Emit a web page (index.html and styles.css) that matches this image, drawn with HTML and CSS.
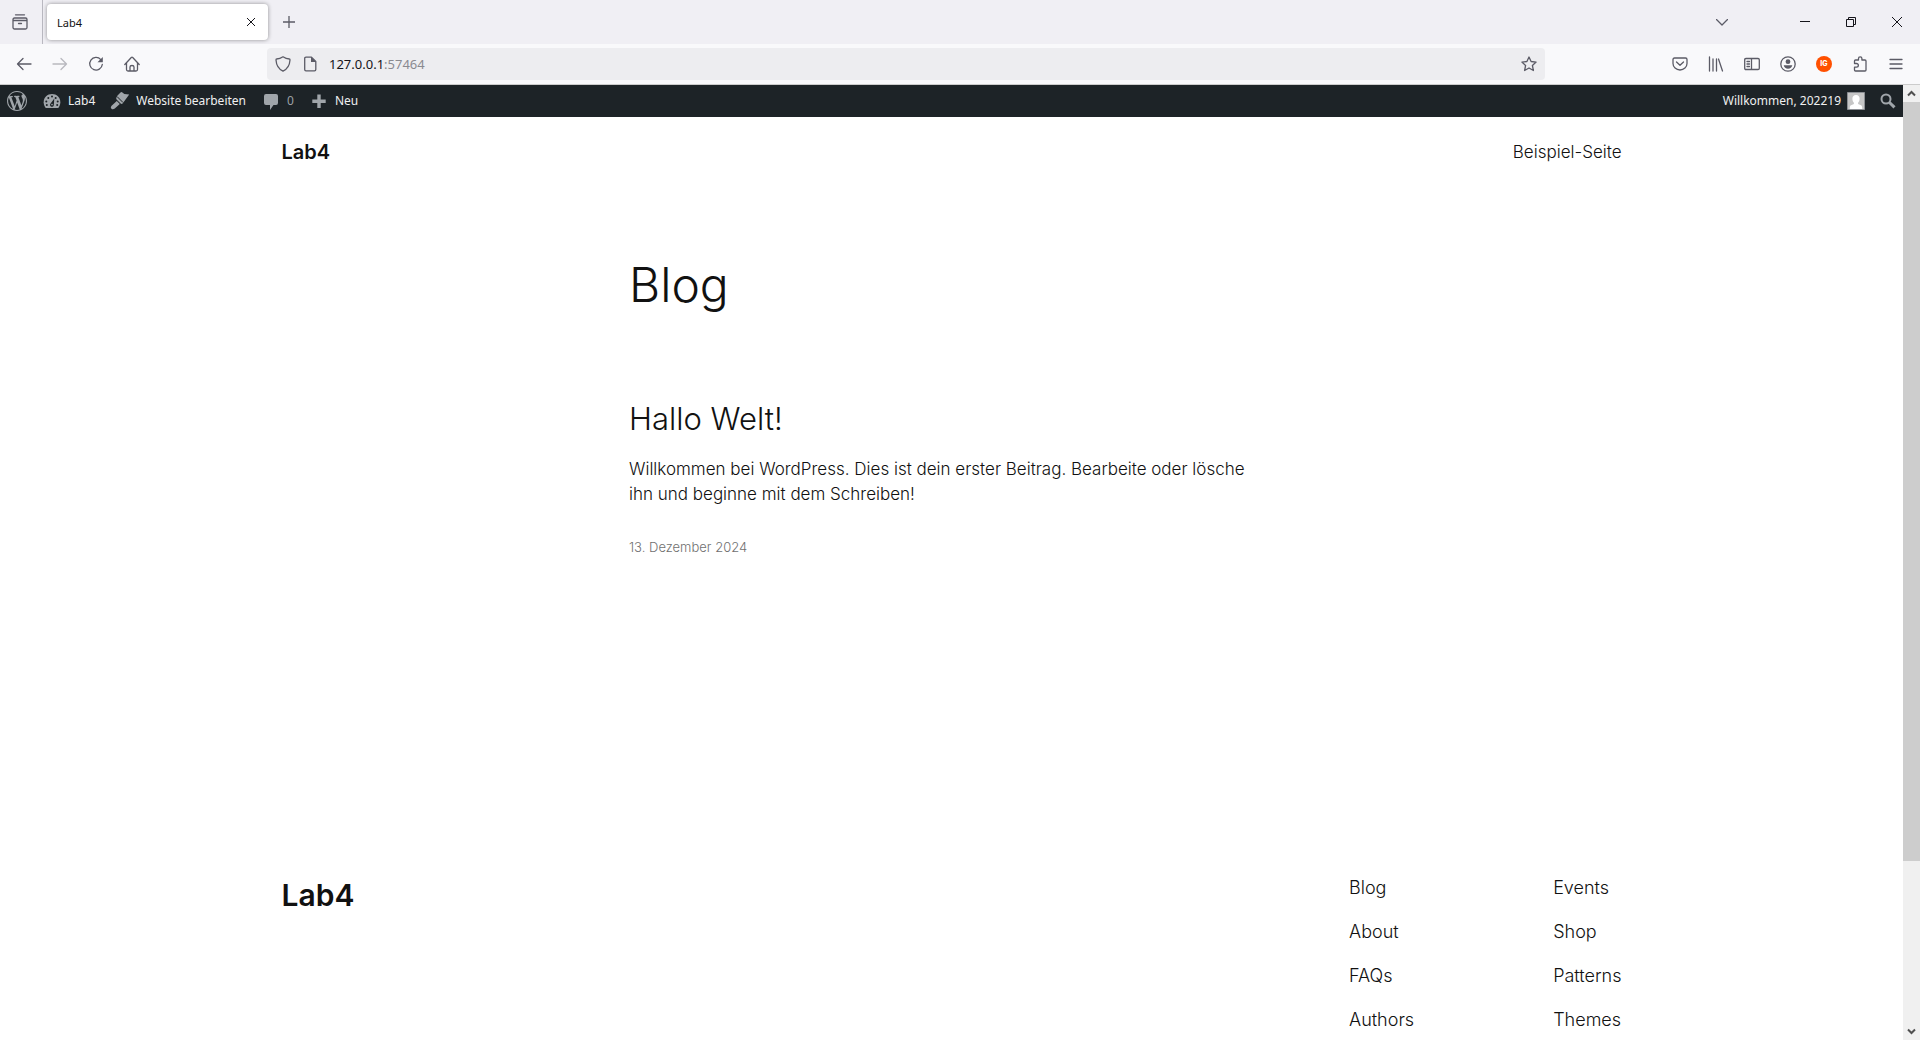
FILE: index.html
```html
<!DOCTYPE html>
<html lang="de">
<head>
<meta charset="utf-8">
<title>Lab4</title>
<link rel="stylesheet" href="styles.css">
</head>
<body>
<div class="tabbar">
  <button class="icon-btn recent" aria-label="Firefox View"><svg class="line" width="16" height="16" viewBox="0 0 16 16"><path d="M3.500 .8h9M1 7V5.500Q1 4 2.500 4h11Q15 4 15 5.500v8a1.500 1.500 0 0 1-1.500 1.500h-11A1.500 1.500 0 0 1 1 13.500zM1 6.500h14M6.500 9.500h3"/></svg></button>
  <div class="tab"><span class="tab-title">Lab4</span><button class="tab-close" aria-label="Tab schließen"><svg class="dark" width="8" height="8" viewBox="0 0 8 8"><path d="M0 0l8 8M8 0L0 8"/></svg></button></div>
  <button class="icon-btn new-tab" aria-label="Neuer Tab"><svg class="line" width="12" height="12" viewBox="0 0 12 12"><path d="M6 0v12M0 6h12"/></svg></button>
  <div class="window-controls">
    <button class="icon-btn list-tabs" aria-label="Alle Tabs auflisten"><svg class="line" width="12" height="7" viewBox="0 0 12 7"><path d="M.5 .5L6 6l5.500-5.500"/></svg></button>
    <button class="icon-btn win" aria-label="Minimieren"><svg class="dark" width="10" height="10" viewBox="0 0 10 10"><path d="M0 4.500h10"/></svg></button>
    <button class="icon-btn win" aria-label="Verkleinern"><svg class="dark" width="10" height="10" viewBox="0 0 10 10"><path d="M.5 2.500h7v7h-7zM2.500 2.500v-2h7v7h-2"/></svg></button>
    <button class="icon-btn win" aria-label="Schließen"><svg class="dark" width="10" height="10" viewBox="0 0 10 10"><path d="M0 0l10 10M10 0L0 10"/></svg></button>
  </div>
</div>

<div class="toolbar">
  <div class="nav-buttons">
    <button class="icon-btn" aria-label="Zurück"><svg class="line" width="16" height="16" viewBox="0 0 16 16"><path d="M15 8H1.500M7 2.500L1.500 8 7 13.500"/></svg></button>
    <button class="icon-btn" aria-label="Vor" disabled><svg class="line" width="16" height="16" viewBox="0 0 16 16"><path d="M1 8h13.500M9 2.500L14.500 8 9 13.500"/></svg></button>
    <button class="icon-btn" aria-label="Neu laden"><svg class="line" width="16" height="16" viewBox="0 0 16 16"><path d="M12.800 3.600A6.300 6.300 0 1 0 14.300 8.500"/><path class="solid" d="M14.800 1v5.300H9.500z"/></svg></button>
    <button class="icon-btn" aria-label="Startseite"><svg class="line" width="16" height="16" viewBox="0 0 16 16"><path d="M.8 8.500L7.300 1.500q.7-.6 1.400 0l6.500 7M2.500 7v6.500q0 1.500 1.500 1.500h8q1.500 0 1.500-1.500V7M6 15v-4q0-1.500 2-1.500t2 1.500v4"/></svg></button>
  </div>
  <div class="urlbar">
    <svg class="line" width="16" height="16" viewBox="0 0 16 16"><path d="M8 .8Q11 2.800 14.500 3q.5 0 .5 1Q14.500 12 8 15.200 1.500 12 1 4q0-1 .5-1Q5 2.800 8 .8z"/></svg>
    <svg class="line" width="16" height="16" viewBox="0 0 16 16"><path d="M4 1.200h5.500l4.300 4.300V13.500q0 1.300-1.300 1.300H4q-1.300 0-1.300-1.300v-11Q2.700 1.200 4 1.200z"/><path class="solid" d="M9 1v5h5z"/></svg>
    <span class="url"><span class="host">127.0.0.1</span>:57464</span>
    <button class="icon-btn star" aria-label="Lesezeichen"><svg class="line" width="16" height="16" viewBox="0 0 16 16"><path d="M8 1l2.100 4.500 5 .6-3.700 3.400 1 5L8 12l-4.400 2.500 1-5L.9 6.100l5-.6z"/></svg></button>
  </div>
  <div class="extensions">
    <button class="icon-btn" aria-label="Pocket"><svg class="line" width="16" height="16" viewBox="0 0 16 16"><path d="M2.500 2h11Q15 2 15 3.500V7.500A7 6.500 0 0 1 1 7.500V3.500Q1 2 2.500 2zM4.500 6L8 9.300 11.500 6"/></svg></button>
    <button class="icon-btn" aria-label="Bibliothek"><svg class="line" width="16" height="16" viewBox="0 0 16 16"><path d="M1.500 1v14M5 3v12M8.500 3v12M10.500 3l4 12"/></svg></button>
    <button class="icon-btn" aria-label="Seitenleisten"><svg class="line" width="16" height="16" viewBox="0 0 16 16"><path d="M2 2.500h12q1.300 0 1.300 1.300v8.400q0 1.300-1.300 1.300H2Q.7 13.500.7 12.200V3.800Q.7 2.500 2 2.500zM7.500 2.500v11M3 5.500h2.500M3 8h2.500M3 10.500h2.500"/></svg></button>
    <button class="icon-btn" aria-label="Konto"><svg class="line" width="16" height="16" viewBox="0 0 16 16"><circle cx="8" cy="8" r="7.200"/><circle class="solid" cx="8" cy="5.700" r="2.400"/><path class="solid" d="M3.700 9.300h8.600q-.8 3.400-4.300 3.400T3.700 9.300z"/></svg></button>
    <button class="icon-btn" aria-label="IG"><span class="ig">IG</span></button>
    <button class="icon-btn" aria-label="Erweiterungen"><svg class="line" width="16" height="16" viewBox="0 0 16 16"><path d="M2.500 7.500V5q0-1 1-1h3V2.500a1.700 1.700 0 0 1 3.400 0V4H13q1 0 1 1v9q0 1-1 1H3.500q-1 0-1-1v-2.800H4.500a1.800 1.800 0 0 0 0-3.700z"/></svg></button>
    <button class="icon-btn" aria-label="Menü"><svg class="line" width="16" height="16" viewBox="0 0 16 16"><path d="M2 3.500h12M2 8h12M2 12.500h12"/></svg></button>
  </div>
</div>

<div class="viewport">
  <div class="page">
    <nav class="adminbar" aria-label="Werkzeugleiste">
      <a href="#" aria-label="Über WordPress"><svg width="20" height="20" viewBox="0 0 20 20"><path d="M20 10c0-5.510-4.490-10-10-10C4.480 0 0 4.490 0 10c0 5.520 4.480 10 10 10 5.510 0 10-4.480 10-10zM7.780 15.370L4.370 6.220c.55-.02 1.170-.08 1.170-.08.5-.06.44-1.130-.06-1.110 0 0-1.450.11-2.370.11-.18 0-.37 0-.58-.01C4.120 2.690 6.870 1.110 10 1.110c2.330 0 4.450.87 6.050 2.340-.68-.11-1.650.39-1.650 1.580 0 .74.45 1.360.9 2.100.35.61.55 1.360.55 2.460 0 1.490-1.400 5-1.400 5l-3.030-8.370c.54-.02.82-.17.82-.17.5-.05.44-1.250-.06-1.220 0 0-1.440.12-2.380.12-.87 0-2.330-.12-2.330-.12-.5-.03-.56 1.200-.06 1.220l.92.08 1.260 3.410zM17.410 10c.24-.64.74-1.870.43-4.250.7 1.290 1.050 2.710 1.050 4.250 0 3.290-1.730 6.240-4.400 7.780.97-2.590 1.940-5.200 2.920-7.780zM6.100 18.090C3.120 16.650 1.110 13.530 1.110 10c0-1.300.23-2.480.72-3.590C3.250 10.300 4.670 14.200 6.100 18.090zm4.030-6.630l2.580 6.980c-.86.29-1.760.45-2.710.45-.79 0-1.570-.11-2.290-.33.81-2.380 1.620-4.740 2.420-7.100z"/></svg></a>
      <a href="#"><svg width="20" height="20" viewBox="0 0 20 20"><path d="M3.760 17h12.480c1.340-1.590 2.090-3.600 2.090-5.790C18.330 6.160 14.600 3 10 3s-8.330 3.160-8.330 8.210c0 2.190.76 4.200 2.090 5.790z"/><g class="cut"><circle cx="10" cy="5.500" r="1"/><circle cx="6.300" cy="7" r="1"/><circle cx="13.700" cy="7" r="1"/><circle cx="4.300" cy="10.500" r="1"/><circle cx="15.700" cy="10.500" r="1"/><circle cx="4.800" cy="14" r="1"/><circle cx="15.200" cy="14" r="1"/><path d="M12.300 7.500l-.5 6.400a1.900 1.900 0 1 1-3.200-1.400z"/></g><circle cx="10" cy="13.600" r=".8"/></svg>Lab4</a>
      <a href="#"><svg width="20" height="20" viewBox="0 0 20 20"><path d="M7.500 4.500L10.500 1.500q.9-.8 1.900 0L14.300 3l4.900.5-6.400 8.800q-1 1.200-2.200.2L6.800 8.700q-1-1-.4-2.300zM6.800 10l3 3-5 4.600q-2 1.400-3.400.1t.2-3z"/><path class="seam" d="M7 5.500l6 6"/></svg>Website bearbeiten</a>
      <a href="#" class="comments"><svg width="20" height="20" viewBox="0 0 20 20"><path d="M5 3h10q2 0 2 2v7q0 2-2 2h-2.500L9 19v-5H5q-2 0-2-2V5q0-2 2-2z"/></svg>0</a>
      <a href="#"><svg width="20" height="20" viewBox="0 0 20 20"><path d="M8.300 3.500h3.400v5h5v3.400h-5v5H8.300v-5h-5V8.500h5z"/></svg>Neu</a>
      <a href="#" class="account">Willkommen, 202219<svg width="18" height="18" viewBox="0 0 18 18"><path class="avatar-bg" d="M.5 .5h17v17H.5z"/><path class="avatar" d="M9 3c2.500 0 3.800 1.700 3.600 4-.1 1.800-.7 3-1.500 3.700v1.200l3.400 1.600q.8.5.8 3.500H2.700q0-3 .8-3.500l3.400-1.600v-1.200C6.100 10 5.500 8.800 5.400 7 5.200 4.700 6.500 3 9 3z"/></svg></a>
      <a href="#" aria-label="Suchen"><svg width="16" height="16" viewBox="0 0 16 16"><circle class="lens" cx="6" cy="6" r="4.500"/><path class="handle" d="M9.500 9.500l5 4.800"/></svg></a>
    </nav>

    <header class="site-header wide">
      <a href="#" class="site-title">Lab4</a>
      <a href="#">Beispiel-Seite</a>
    </header>

    <main class="content">
      <h1>Blog</h1>
      <article>
        <h2><a href="#">Hallo Welt!</a></h2>
        <p>Willkommen bei WordPress. Dies ist dein erster Beitrag. Bearbeite oder lösche ihn und beginne mit dem Schreiben!</p>
        <a href="#" class="date"><time datetime="2024-12-13">13. Dezember 2024</time></a>
      </article>
    </main>

    <footer class="site-footer wide">
      <a href="#" class="footer-title">Lab4</a>
      <nav class="footer-links" aria-label="Fußzeile">
        <div><a href="#">Blog</a><a href="#">About</a><a href="#">FAQs</a><a href="#">Authors</a></div>
        <div><a href="#">Events</a><a href="#">Shop</a><a href="#">Patterns</a><a href="#">Themes</a></div>
      </nav>
    </footer>
  </div>
  <div class="scrollbar" aria-hidden="true">
    <svg width="17" height="17" viewBox="0 0 17 17"><path d="M5 10.500L8.500 7l3.500 3.500"/></svg>
    <div class="thumb"></div>
    <div class="track"></div>
    <svg width="17" height="17" viewBox="0 0 17 17"><path d="M5 6.500L8.500 10 12 6.500"/></svg>
  </div>
</div>
</body>
</html>
```
FILE: styles.css
```css
* { box-sizing: border-box; }

body {
  margin: 0;
  height: 100vh;
  display: flex;
  flex-direction: column;
  overflow: hidden;
  background: #fff;
  color: #111;
  font-family: "Noto Sans", sans-serif;
  font-size: 12px;
}

a { color: inherit; text-decoration: none; }
button { padding: 0; border: 0; background: none; font: inherit; color: inherit; }
svg { display: block; flex: none; }

.line { fill: none; stroke: #5b5b66; stroke-width: 1.3; stroke-linecap: round; stroke-linejoin: round; }
.line .solid { fill: #5b5b66; stroke: none; }
.dark { fill: none; stroke: #15141a; stroke-width: 1; }

.icon-btn { display: flex; align-items: center; justify-content: center; width: 36px; height: 36px; }
.icon-btn:disabled { opacity: 0.4; }

/* Browser tabs */
.tabbar { flex: none; display: flex; align-items: center; height: 44px; background: #f0eff4; }
.recent { width: 43px; height: 44px; padding-right: 3px; border-right: 1px solid #b9b8c0; }
.tab {
  display: flex;
  align-items: center;
  justify-content: space-between;
  width: 221px;
  height: 36px;
  margin-left: 4px;
  padding: 0 13px 0 10px;
  border-radius: 4px;
  background: #fff;
  box-shadow: 0 0 4px rgba(0, 0, 0, 0.4);
  font-size: 11px;
}
.tab-close { display: flex; }
.new-tab { margin-left: 3px; }
.window-controls { display: flex; align-items: center; margin-left: auto; }
.list-tabs { margin-right: 42px; }
.win { width: 46px; }

/* Browser toolbar */
.toolbar {
  flex: none;
  display: flex;
  align-items: center;
  height: 41px;
  padding: 0 6px;
  border-bottom: 1px solid #ccc;
  background: #f9f9fb;
}
.nav-buttons { display: flex; flex: 0 0 261px; }
.urlbar {
  display: flex;
  align-items: center;
  gap: 11px;
  flex: 0 1 1278px;
  height: 32px;
  padding-left: 8px;
  border-radius: 4px;
  background: #ededf0;
}
.url { font-size: 13px; color: #8a8a90; }
.host { color: #15141a; }
.star { width: 32px; margin-left: auto; }
.extensions { display: flex; margin-left: auto; }
.ig {
  width: 16px;
  height: 16px;
  border-radius: 50%;
  background: #ff5000;
  color: #fff;
  font: 800 7px/16px Inter, sans-serif;
  text-align: center;
}

/* Web page area */
.viewport { flex: 1; min-height: 0; display: flex; }
.page { flex: 1; overflow: hidden; font-family: Inter, sans-serif; font-size: 17px; font-weight: 300; line-height: 25px; }

.adminbar {
  display: flex;
  align-items: center;
  gap: 15px;
  height: 32px;
  padding: 0 7px;
  background: #1d2327;
  color: #f0f0f1;
  font: 400 12px/34px "Noto Sans", sans-serif;
}
.adminbar a { display: flex; align-items: center; gap: 6px; }
.adminbar svg { fill: #a0a5aa; }
.adminbar .cut { fill: #1d2327; }
.adminbar .seam { stroke: #1d2327; stroke-width: 1; fill: none; }
.adminbar .comments { color: #9ca1a6; }
.adminbar .account { margin-left: auto; }
.adminbar .avatar-bg { fill: #c6c6c6; stroke: #8c8f94; }
.adminbar .avatar { fill: #fff; }
.adminbar .lens { fill: none; stroke: #a0a5aa; stroke-width: 2; }
.adminbar .handle { fill: none; stroke: #a0a5aa; stroke-width: 3; }

.wide { display: flex; justify-content: space-between; max-width: 1340px; margin: 0 auto; }
.site-header { align-items: center; height: 70px; }
.site-title { font-size: 20px; font-weight: 600; }

.content { max-width: 645px; margin: 0 auto; padding-top: 70px; }
h1, h2, p { margin: 0; font-weight: 300; }
h1 { font-size: 48px; line-height: 56px; }
article { padding-top: 86px; }
h2 { font-size: 31px; line-height: 40px; }
p { max-width: 630px; padding: 18px 0 27px; }
.date { font-size: 13px; color: #707070; }

.site-footer { padding-top: 315px; }
.footer-title { font-size: 30px; font-weight: 600; line-height: 40px; }
.footer-links { display: flex; gap: 139px; font-size: 18px; }
.footer-links div { display: flex; flex-direction: column; gap: 19px; }

/* Page scrollbar */
.scrollbar { flex: none; display: flex; flex-direction: column; width: 17px; background: #f0f0f0; }
.scrollbar svg { fill: none; stroke: #505050; stroke-width: 2; }
.thumb { flex: 760; background: #cdcdcd; }
.track { flex: 162; }
```
